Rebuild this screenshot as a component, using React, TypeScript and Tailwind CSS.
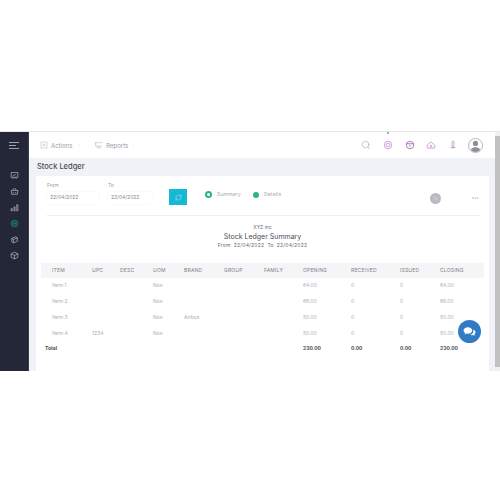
import React from 'react';
import { ChevronDown, Search, MoreHorizontal, RefreshCw } from 'lucide-react';

const rows = [
  { item: 'Item-1', upc: '', uom: 'Nos', brand: '', opening: '64.00', closing: '64.00' },
  { item: 'Item-2', upc: '', uom: 'Nos', brand: '', opening: '66.00', closing: '66.00' },
  { item: 'Item-3', upc: '', uom: 'Nos', brand: 'Airbus', opening: '50.00', closing: '50.00' },
  { item: 'Item-4', upc: '1234', uom: 'Nos', brand: '', opening: '50.00', closing: '50.00' },
];

const headers = ['ITEM', 'UPC', 'DESC', 'UOM', 'BRAND', 'GROUP', 'FAMILY', 'OPENING', 'RECEIVED', 'ISSUED', 'CLOSING'];

const gridCols = 'grid grid-cols-[40px_28px_33px_31px_40px_40px_39px_48px_49px_40px_54px]';

function SideIcon({ children, active }: { children: React.ReactNode; active?: boolean }) {
  return (
    <svg
      viewBox="0 0 16 16"
      fill={active ? '#1c4f57' : 'none'}
      stroke={active ? '#2a7f80' : '#b9bcc6'}
      strokeWidth="1.2"
      className="w-[9px] h-[9px]"
    >
      {children}
    </svg>
  );
}

function TopIcon({ children, dark }: { children: React.ReactNode; dark?: boolean }) {
  return (
    <svg viewBox="0 0 16 16" fill="none" stroke={dark ? '#a55cb3' : '#c690d2'} strokeWidth="1.3" className="w-[10px] h-[10px]">
      {children}
    </svg>
  );
}

function Sidebar() {
  return (
    <div className="w-[29px] shrink-0 bg-[#242738] flex flex-col items-center pt-[10px] border-r border-[#3a3d4e]">
      <div className="flex flex-col gap-[2px] items-start w-[10px]">
        <div className="h-px w-[10px] bg-[#9fa1ac]" />
        <div className="h-px w-[7px] bg-[#9fa1ac]" />
        <div className="h-px w-[10px] bg-[#9fa1ac]" />
      </div>
      <div className="flex flex-col items-center gap-[7px] mt-[22px]">
        <SideIcon>
          <rect x="2" y="3" width="12" height="8" />
          <path d="M5 14l1-3M11 14l-1-3M5 7l2 1 3-2" />
        </SideIcon>
        <SideIcon>
          <path d="M2 6h12l-1 7H3zM5 6l2-4M11 6L9 2M6 9v2M10 9v2" />
        </SideIcon>
        <SideIcon>
          <path d="M2 14v-4h2v4zM7 14V7h2v7zM12 14V3h2v11z" />
        </SideIcon>
        <SideIcon active>
          <circle cx="8" cy="8" r="6" />
          <path d="M5 8h6" />
        </SideIcon>
        <SideIcon>
          <path d="M3 6l7-3 3 2v6l-7 3-3-2zM3 6l3 2v6M6 8l7-3" />
        </SideIcon>
        <SideIcon>
          <path d="M8 2l6 3v6l-6 3-6-3V5zM2 5l6 3 6-3M8 8v6" />
        </SideIcon>
      </div>
    </div>
  );
}

function TopBar() {
  return (
    <div className="h-[26px] shrink-0 bg-white flex items-center pl-[11px] pr-[12px] text-[6px] text-[#9a9ca5]">
      <svg viewBox="0 0 16 16" fill="none" stroke="#b4b6be" strokeWidth="1" className="w-[8px] h-[8px]">
        <rect x="2" y="2" width="12" height="12" />
        <path d="M8 5v6M5 8h6" />
      </svg>
      <span className="ml-[3px]">Actions</span>
      <ChevronDown className="w-[5px] h-[5px] ml-[5px] text-[#d2d3d8]" />
      <svg viewBox="0 0 16 16" fill="none" stroke="#b4b6be" strokeWidth="1" className="w-[9px] h-[9px] ml-[12px]">
        <path d="M1 3h14M3 3v6h11M5 12h8M7 9v3" />
      </svg>
      <span className="ml-[3px]">Reports</span>
      <ChevronDown className="w-[5px] h-[5px] ml-[3px] text-[#d2d3d8]" />
      <div className="ml-auto flex items-center">
        <Search className="w-[10px] h-[10px] text-[#a9aab1]" strokeWidth={1.5} />
        <div className="relative ml-[12px] flex">
          <div className="absolute -top-[8px] left-[4px] w-[2px] h-[2px] rounded-full bg-[#85878f]" />
          <TopIcon>
            <circle cx="8" cy="8" r="6" />
            <circle cx="8" cy="8" r="3" />
          </TopIcon>
        </div>
        <div className="ml-[11.5px] flex">
          <TopIcon dark>
            <circle cx="8" cy="8" r="6" />
            <path d="M2 6h12M8 8v3" />
          </TopIcon>
        </div>
        <div className="ml-[11.5px] flex">
          <TopIcon>
            <path d="M2 8l6-5 6 5v5H2z" />
            <circle cx="8" cy="10" r="1.500" />
          </TopIcon>
        </div>
        <div className="ml-[11.5px] flex">
          <TopIcon>
            <rect x="6.500" y="1.500" width="3" height="9" rx="1.500" />
            <path d="M4 12h8M8 10v4" />
          </TopIcon>
        </div>
        <div className="ml-[10.500px] w-[15px] h-[15px] rounded-full border border-[#b5b6bb] bg-white flex items-center justify-center overflow-hidden">
          <svg viewBox="0 0 16 16" className="w-[13px] h-[13px]" fill="#8f9095">
            <circle cx="8" cy="5.500" r="3.200" />
            <path d="M1.500 16c0-4 3-6 6.500-6s6.500 2 6.500 6z" />
          </svg>
        </div>
      </div>
    </div>
  );
}

function Filters() {
  return (
    <div className="flex items-start ml-[11px] mr-[9px] h-[40px] border-b border-[#eeeef2] shrink-0 pt-[6px] relative">
      <div className="w-[61px] text-[5px] text-[#9a9ca5]">
        <div className="leading-[6px]">From</div>
        <div className="mt-[4px] pl-[3px] w-[51px] h-[12px] flex items-center text-[#85878f] shadow-[0_0_2px_#f0f0f3]">22/04/2022</div>
      </div>
      <div className="w-[61px] text-[5px] text-[#9a9ca5]">
        <div className="leading-[6px]">To</div>
        <div className="mt-[4px] pl-[3px] w-[44px] h-[12px] flex items-center text-[#85878f] shadow-[0_0_2px_#f0f0f3]">22/04/2022</div>
      </div>
      <div className="w-[18px] h-[16px] mt-[7px] bg-[#17b8d6] flex items-center justify-center shrink-0">
        <RefreshCw className="w-[7px] h-[7px] text-[#bdeaf3]" strokeWidth={1.5} />
      </div>
      <div className="ml-[18px] mt-[9px] flex items-center text-[5px] tracking-[0.2px] text-[#a3a5ad]">
        <div className="w-[7px] h-[7px] rounded-full bg-[#2fae92] flex items-center justify-center">
          <div className="w-[3px] h-[3px] rounded-full bg-white" />
        </div>
        <span className="ml-[5px]">Summary</span>
        <div className="w-[6px] h-[6px] rounded-full bg-[#2fae92] ml-[12px]" />
        <span className="ml-[5px]">Details</span>
      </div>
      <div className="w-[11px] h-[11px] rounded-full bg-[#b9b9c4] ml-auto mt-[11px] mr-[30px] flex items-center justify-center">
        <Search className="w-[5px] h-[5px] text-[#e5e5ea]" />
      </div>
      <MoreHorizontal className="w-[8px] h-[8px] mt-[12px] mr-[1px] text-[#b0b1b8]" />
    </div>
  );
}

function LedgerTable() {
  return (
    <div className="ml-[5px] mr-[5px] mt-[13px]">
      <div className={`${gridCols} h-[15px] items-center bg-[#f5f5f8] text-[5px] tracking-[0.2px] text-[#7c7e88]`}>
        {headers.map((h) => (
          <div key={h} className="pl-[11px] whitespace-nowrap">{h}</div>
        ))}
      </div>
      {rows.map((r) => (
        <div key={r.item} className={`${gridCols} h-[15.8px] items-center text-[5px] text-[#adafb6]`}>
          <div className="pl-[11px]">{r.item}</div>
          <div className="pl-[11px]">{r.upc}</div>
          <div />
          <div className="pl-[11px]">{r.uom}</div>
          <div className="pl-[11px]">{r.brand}</div>
          <div />
          <div />
          <div className="pl-[11px]">{r.opening}</div>
          <div className="pl-[11px]">0</div>
          <div className="pl-[11px]">0</div>
          <div className="pl-[11px]">{r.closing}</div>
        </div>
      ))}
      <div className={`${gridCols} h-[15.8px] items-center text-[5px] font-bold text-[#4b4d57]`}>
        <div className="pl-[4px]">Total</div>
        <div />
        <div />
        <div />
        <div />
        <div />
        <div />
        <div className="pl-[11px]">230.00</div>
        <div className="pl-[11px]">0.00</div>
        <div className="pl-[11px]">0.00</div>
        <div className="pl-[11px]">230.00</div>
      </div>
    </div>
  );
}

export default function App() {
  return (
    <div className="w-[500px] h-[500px] bg-white overflow-hidden font-['Inter','Liberation_Sans',sans-serif]">
      <div className="h-[131px]" />
      <div className="relative h-[240px] flex border-t border-[#e8e8ec]">
        <Sidebar />
        <div className="flex-1 min-w-0 flex flex-col bg-[#f1f2f8]">
          <TopBar />
          <div className="h-[18px] shrink-0 pl-[8px] flex items-center text-[7.500px] font-medium text-[#4a4c57]">
            Stock Ledger
          </div>
          <div className="flex-1 bg-white ml-[7px] mr-[6px] flex flex-col">
            <Filters />
            <div className="flex flex-col items-center mt-[7px] text-[#666873]">
              <div className="text-[5px] leading-[9px]">XYZ inc</div>
              <div className="text-[7px] leading-[9px] text-[#4a4c57]">Stock Ledger Summary</div>
              <div className="text-[5px] leading-[9px] tracking-[0.2px]">From&nbsp; 22/04/2022&nbsp; To&nbsp; 22/04/2022</div>
            </div>
            <LedgerTable />
          </div>
        </div>
        <div className="w-[5px] shrink-0 bg-[#f1f1f1] flex flex-col py-[4px]">
          <div className="flex-1 bg-[#c1c1c1]" />
        </div>
        <div className="absolute left-[458px] top-[188px] w-[23px] h-[23px] rounded-full bg-[#2f7cc5] flex items-center justify-center">
          <svg viewBox="0 0 24 24" fill="#ffffff" className="w-[13px] h-[13px]">
            <path d="M9 4c4.400 0 8 2.600 8 6s-3.600 6-8 6c-.9 0-1.800-.1-2.600-.3L3 18l1-3.200C2.500 13.700 1 12 1 10c0-3.400 3.600-6 8-6z" />
            <path d="M19 8.500c2.400.9 4 2.800 4 5 0 1.600-.9 3-2.200 4l.8 3-3.300-1.900c-1.700.4-3.900.2-5.300-.6 4.200-.4 7-3.400 6-9.500z" />
          </svg>
        </div>
      </div>
    </div>
  );
}
